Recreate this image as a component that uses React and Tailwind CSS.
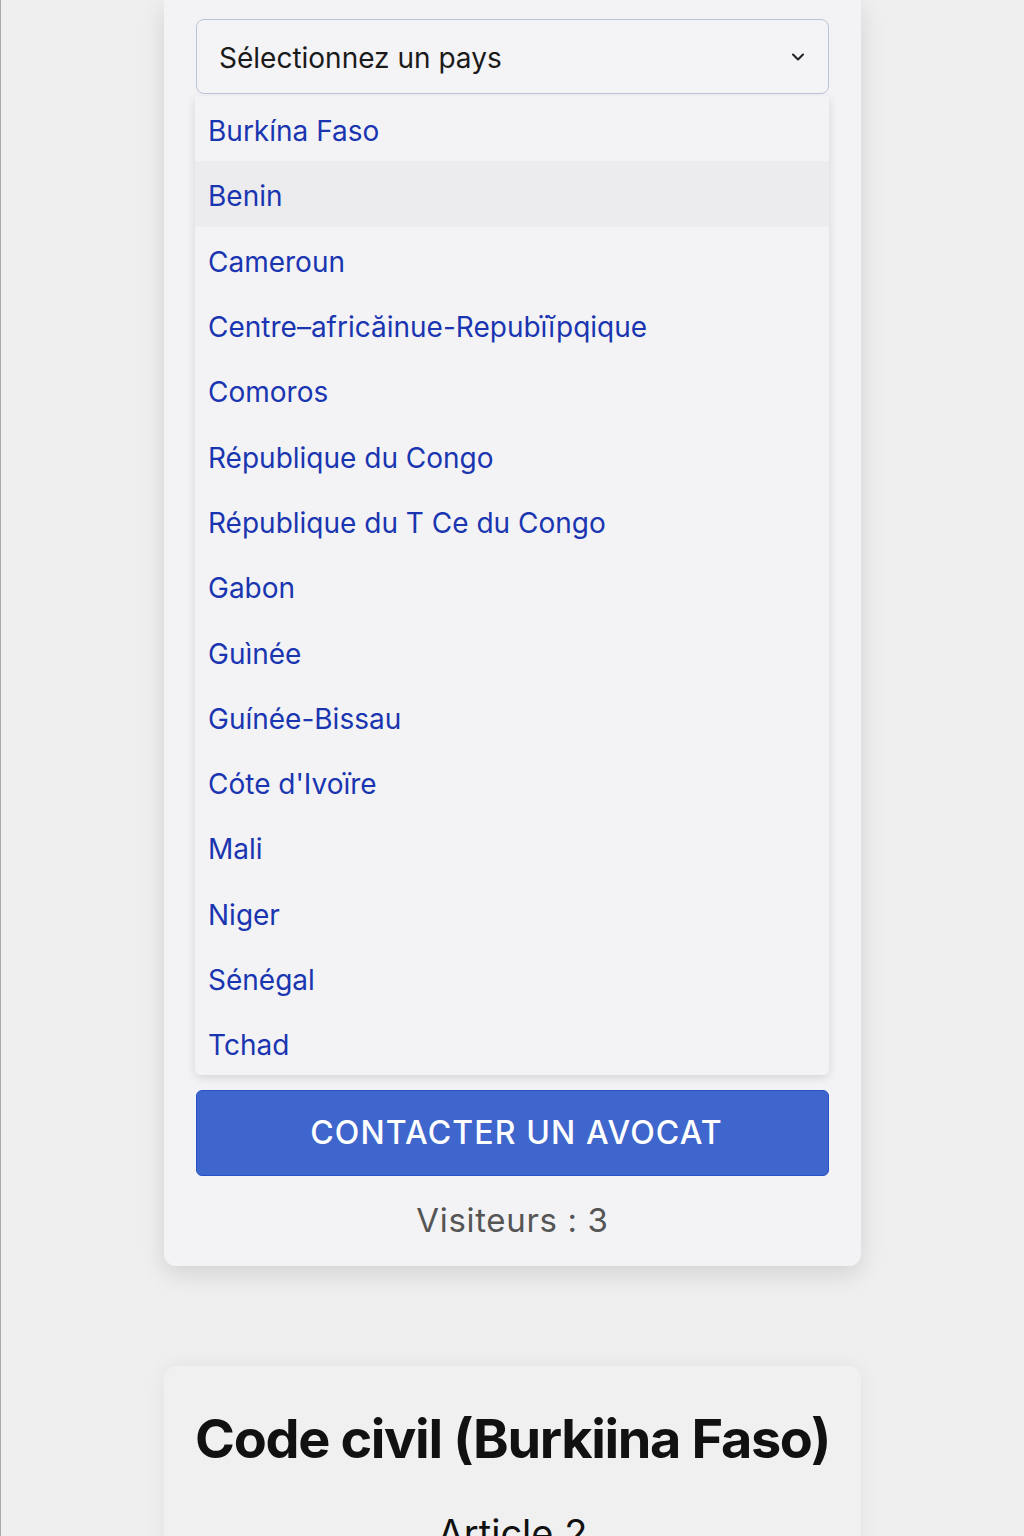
import { ChevronDown } from 'lucide-react'

const countries = [
  'Burkína Faso',
  'Benin',
  'Cameroun',
  'Centre–africăinue-Repubïĭpqique',
  'Comoros',
  'République du Congo',
  'République du T Ce  du Congo',
  'Gabon',
  'Guìnée',
  'Guínée-Bissau',
  "Cóte d'Ivoїre",
  'Mali',
  'Niger',
  'Sénégal',
  'Tchad',
]

function App() {
  return (
    <div className="min-h-[1536px] overflow-hidden border-l border-[#a8a8a8] bg-[#efefef] font-['Inter',sans-serif]">
      <section className="mx-auto w-[697px] rounded-b-xl bg-[#f3f3f5] px-[32px] pt-[19px] pb-[20px] shadow-[0_8px_24px_rgba(0,0,0,0.12)]">
        <div className="flex h-[75px] items-center justify-between rounded-lg border border-[#bcc4d8] bg-[#f4f4f6] pr-5 pl-[22px]">
          <span className="pt-[3px] text-[28px] text-[#1a1a1a]">Sélectionnez un pays</span>
          <ChevronDown className="h-5 w-5 text-[#222]" strokeWidth={2.5} />
        </div>

        <ul className="mt-[2px] -ml-px rounded-b-md bg-[#f3f3f6] shadow-[0_3px_10px_rgba(0,0,0,0.12)]">
          {countries.map((country, index) => (
            <li
              key={country}
              className={`flex h-[65.3px] items-center pt-[5px] pl-[13px] text-[28px] text-[#1a35b0] ${index === 1 ? 'bg-[#ececef]' : ''}`}
            >
              {country}
            </li>
          ))}
        </ul>

        <button
          type="button"
          className="mt-[15px] flex h-[86px] w-full items-center justify-center rounded-md border border-[#2552c8] bg-[#3f66cc] pl-2 text-[32px] font-medium tracking-[0.035em] text-white"
        >
          CONTACTER UN AVOCAT
        </button>

        <p className="mt-[20px] text-center text-[33px] tracking-[0.02em] text-[#555]">Visiteurs : 3</p>
      </section>

      <section className="mx-auto mt-[100px] w-[697px] rounded-t-xl bg-[#f0f0f0] px-[10px] pt-[32px] shadow-[0_0_20px_rgba(0,0,0,0.06)]">
        <h1 className="text-center text-[54px] font-bold tracking-tight whitespace-nowrap text-[#111]">Code civil (Burkiina Faso)</h1>
        <h2 className="mt-[26px] text-center text-[38px] text-[#111]">Article 2</h2>
      </section>
    </div>
  )
}

export default App
